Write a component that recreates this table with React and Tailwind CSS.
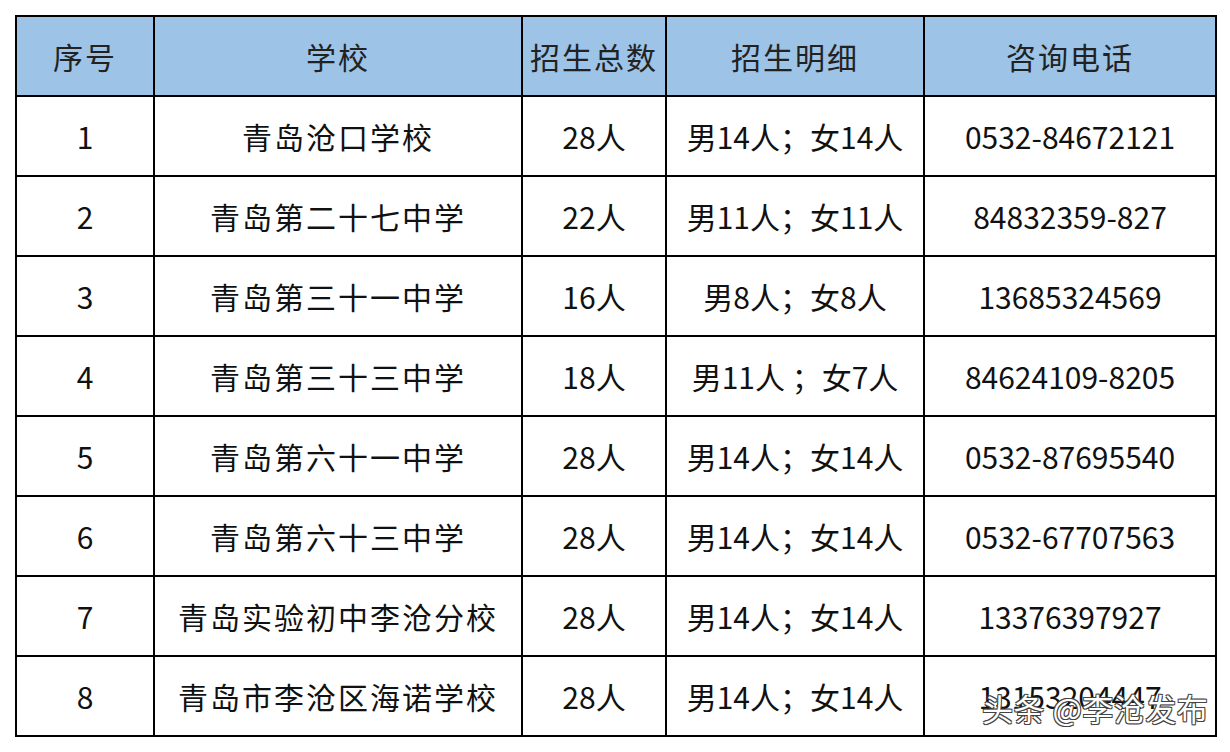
import React from 'react';

const rows = [
    ['1', '青岛沧口学校', '28人', '男14人；女14人', '0532-84672121'],
    ['2', '青岛第二十七中学', '22人', '男11人；女11人', '84832359-827'],
    ['3', '青岛第三十一中学', '16人', '男8人；女8人', '13685324569'],
    ['4', '青岛第三十三中学', '18人', '男11人 ；女7人', '84624109-8205'],
    ['5', '青岛第六十一中学', '28人', '男14人；女14人', '0532-87695540'],
    ['6', '青岛第六十三中学', '28人', '男14人；女14人', '0532-67707563'],
    ['7', '青岛实验初中李沧分校', '28人', '男14人；女14人', '13376397927'],
    ['8', '青岛市李沧区海诺学校', '28人', '男14人；女14人', '13153204447'],
];

const headers = ['序号', '学校', '招生总数', '招生明细', '咨询电话'];

const App = () => {
    return (
        <div className="relative w-[1230px] h-[752px] bg-white overflow-hidden font-['Noto_Sans_CJK_SC','Noto_Sans',sans-serif]">
            <div className="pt-[15px] pl-[15px]">
                <table className="table-fixed border-collapse w-[1200px] text-[30px] leading-none text-[#111]">
                    <colgroup>
                        <col className="w-[138px]" />
                        <col className="w-[368px]" />
                        <col className="w-[144px]" />
                        <col className="w-[258px]" />
                        <col className="w-[292px]" />
                    </colgroup>
                    <thead>
                        <tr className="h-[80px] bg-[#9dc3e6]">
                            {headers.map((h) => (
                                <th key={h} className="border-2 border-black p-0 font-normal text-center text-[#222] tracking-[2px]">
                                    {h}
                                </th>
                            ))}
                        </tr>
                    </thead>
                    <tbody>
                        {rows.map((r) => (
                            <tr key={r[0]} className="h-[80px]">
                                {r.map((c, i) => (
                                    <td
                                        key={i}
                                        className={i === 1 ? 'border-2 border-black p-0 text-center whitespace-pre tracking-[2px]' : 'border-2 border-black p-0 text-center whitespace-pre'}
                                    >
                                        {c}
                                    </td>
                                ))}
                            </tr>
                        ))}
                    </tbody>
                </table>
            </div>

            {/* watermark */}
            <div className="absolute left-[982px] top-[692px] text-[31px] leading-none text-white tracking-[0.5px] [text-shadow:-1px_-1px_0_#444,1px_-1px_0_#444,-1px_1px_0_#444,1px_1px_0_#444,0_1px_0_#444,0_-1px_0_#444]">
                头条 @李沧发布
            </div>
        </div>
    );
};

export default App;
